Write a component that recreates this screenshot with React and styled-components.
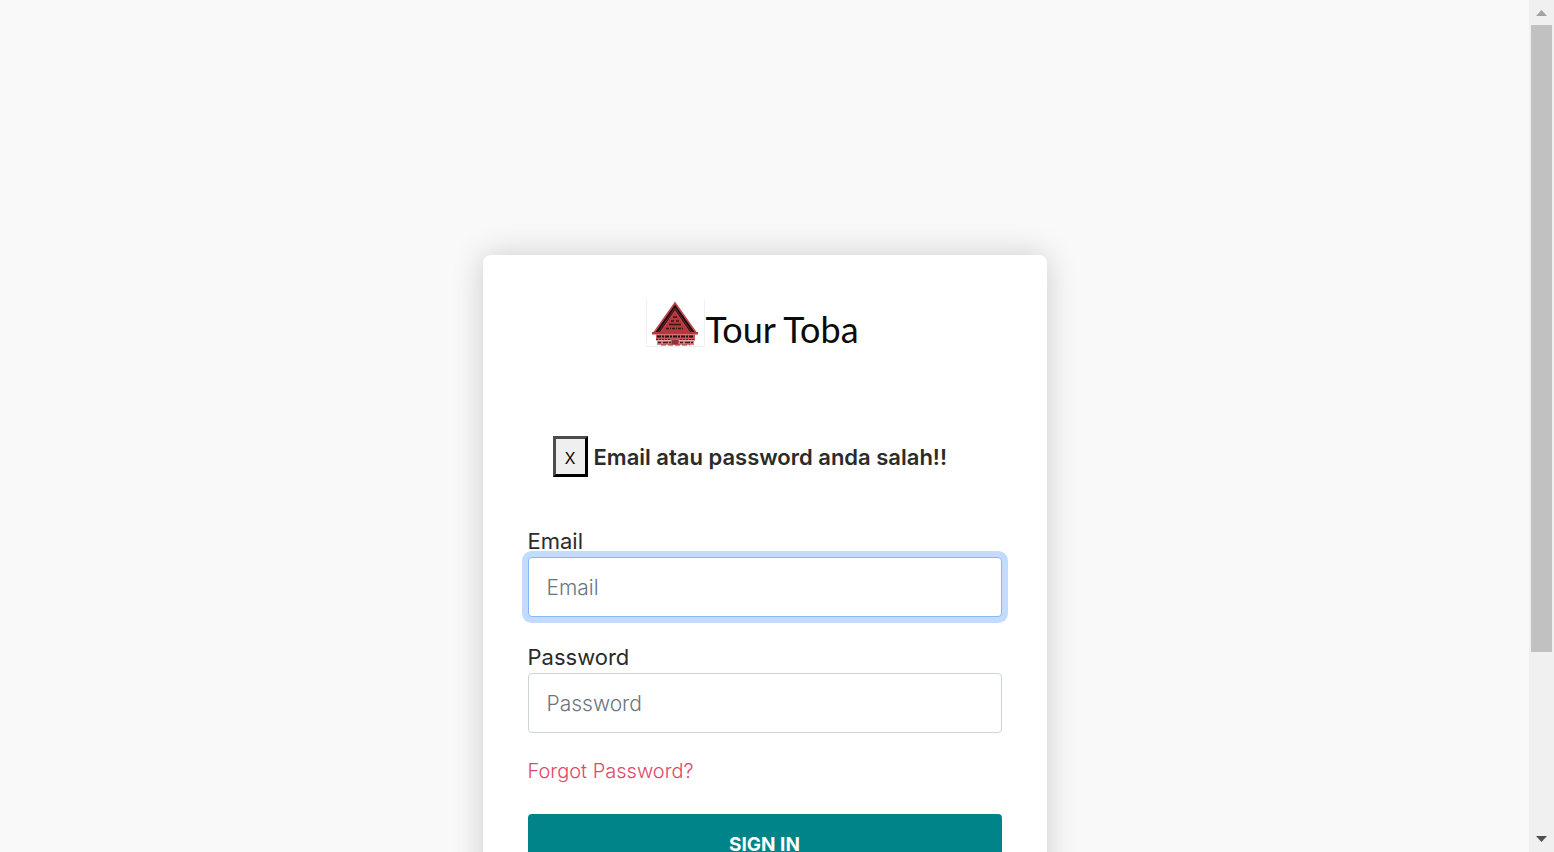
import React from "react";
import styled, { createGlobalStyle } from "styled-components";

const GlobalStyle = createGlobalStyle`
  *, *::before, *::after { box-sizing: border-box; }
  body {
    margin: 0;
    background: #f9f9f9;
    color: #212529;
    font-family: Inter, "Open Sans", sans-serif;
  }
`;

const Shell = styled.div`
  display: flex;
  height: 100vh;
`;

const Viewport = styled.main`
  flex: 1;
  min-width: 0;
  overflow-y: auto;
  scrollbar-width: none;
  padding: 255px 24px 170px;
`;

const Card = styled.form`
  width: 100%;
  max-width: 564px;
  margin: 0 auto;
  padding: 45px;
  background: #fff;
  border-radius: 8px;
  box-shadow: 0 0 32px rgba(0, 0, 0, 0.18);
`;

const Brand = styled.header`
  display: flex;
  align-items: center;
  justify-content: center;
  height: 47px;
  margin: 0 24px 89px 0;
`;

const House = styled.svg`
  width: 59px;
  height: 47px;
  flex: none;
`;

const BrandName = styled.span`
  padding-top: 12px;
  color: #0b0b0b;
  font: 400 36px/35px Lato, sans-serif;
  white-space: nowrap;
`;

const Alert = styled.div`
  display: flex;
  align-items: center;
  gap: 6px;
  height: 41px;
  margin: 0 25px 52px;
  font-size: 22px;
  font-weight: 600;
  color: #2b2b2b;
  white-space: nowrap;
`;

const Dismiss = styled.button`
  width: 35px;
  height: 41px;
  padding: 0;
  border: 3px solid;
  border-color: #4c4c4c #000 #000 #4c4c4c;
  background: #efefef;
  color: #000;
  font: 300 21px/35px Inter, sans-serif;
`;

const Field = styled.div`
  display: flex;
  flex-direction: column;
  margin-bottom: 28px;
`;

const Label = styled.label`
  height: 28px;
  color: #2b2b2b;
  font-size: 22px;
  line-height: 24px;
`;

const Input = styled.input`
  width: 100%;
  height: 60px;
  padding: 0 18px;
  border: 1px solid #ced4da;
  border-radius: 4px;
  background: #fff;
  color: #212529;
  font: 300 21px/28px Inter, sans-serif;

  &::placeholder {
    color: #6c757d;
    opacity: 1;
  }

  &:focus {
    outline: 0;
    border-color: #86b7fe;
    box-shadow: 0 0 0 6px #c2dbfe;
  }
`;

const ForgotLink = styled.a`
  display: block;
  width: fit-content;
  margin-bottom: 33px;
  color: #e0486a;
  font-size: 20px;
  font-weight: 300;
  line-height: 20px;
  text-decoration: none;
`;

const Submit = styled.button`
  width: 100%;
  height: 62px;
  border: 0;
  border-radius: 4px;
  background: #008489;
  color: #fff;
  font: 700 19px/28px Inter, sans-serif;
`;

const ScrollRail = styled.div`
  display: flex;
  flex-direction: column;
  flex: none;
  width: 25px;
  background: #f0f0f0;
`;

const RailTrack = styled.div`
  flex: 1;
  padding: 0 2px;
`;

const RailThumb = styled.div`
  height: 78.2%;
  background: #c1c1c1;
`;

const RailArrow = styled.svg`
  display: block;
  width: 25px;
  height: 25px;
  fill: ${(p) => (p.$muted ? "#a3a3a3" : "#505050")};
`;

function HouseMark() {
  return (
    <House viewBox="0 0 59 47" aria-hidden="true">
      <path d="M.5 0V46.5H58.5V0" fill="none" stroke="#f0f0f0" />
      <path d="M29 1.5 52 34H6Z" fill="#c4434a" />
      <path d="M29 4.500 48.500 32H44L29 10 14 32H9.500Z" fill="#1c0e0f" />
      <path d="M29 11.500 42.500 32H15.500Z" fill="#b5383e" />
      <path d="M29 8 45.500 32M29 8 12.500 32" stroke="#b5383e" strokeWidth=".6" />
      <path d="M27 17h4M25 21h3m2 0h3M23 24.500h12" stroke="#391517" strokeWidth="1.300" />
      <path d="M20 28.500h18" stroke="#391517" strokeWidth="1.600" strokeDasharray="3 1 1 1" />
      <path d="M6 32h46v2.500H6z" fill="#b5383e" />
      <path d="M10 34.500h39v6H10z" fill="#c9565b" />
      <path d="M11 36.500h37" stroke="#261315" strokeWidth="2" strokeDasharray="4 1 2 1" />
      <path d="M10 39.500h39" stroke="#602023" strokeDasharray="2 1" />
      <path d="M11 41h37v4H11z" fill="#dc8083" />
      <path d="M12 42.500h35" stroke="#3c1b1d" strokeWidth="1.500" strokeDasharray="3 2 5 1" />
      <path d="M25 39h8v6h-8z" fill="#c9565b" />
      <path d="M26 41h6m-6 2h6" stroke="#47191c" />
      <path d="M15 45h29" stroke="#9b3438" strokeDasharray="5 2" />
    </House>
  );
}

export default function App() {
  return (
    <>
      <GlobalStyle />
      <Shell>
        <Viewport>
          <Card onSubmit={(e) => e.preventDefault()}>
            <Brand>
              <HouseMark />
              <BrandName>Tour Toba</BrandName>
            </Brand>
            <Alert role="alert">
              <Dismiss type="button">x</Dismiss>
              <span>Email atau password anda salah!!</span>
            </Alert>
            <Field>
              <Label htmlFor="email">Email</Label>
              <Input id="email" type="email" placeholder="Email" autoFocus />
            </Field>
            <Field>
              <Label htmlFor="password">Password</Label>
              <Input id="password" type="password" placeholder="Password" />
            </Field>
            <ForgotLink href="#forgot">Forgot Password?</ForgotLink>
            <Submit type="submit">SIGN IN</Submit>
          </Card>
        </Viewport>
        <ScrollRail aria-hidden="true">
          <RailArrow $muted viewBox="0 0 25 25">
            <path d="M12.500 10 18 16H7Z" />
          </RailArrow>
          <RailTrack>
            <RailThumb />
          </RailTrack>
          <RailArrow viewBox="0 0 25 25">
            <path d="M7 9H18L12.500 15Z" />
          </RailArrow>
        </ScrollRail>
      </Shell>
    </>
  );
}
